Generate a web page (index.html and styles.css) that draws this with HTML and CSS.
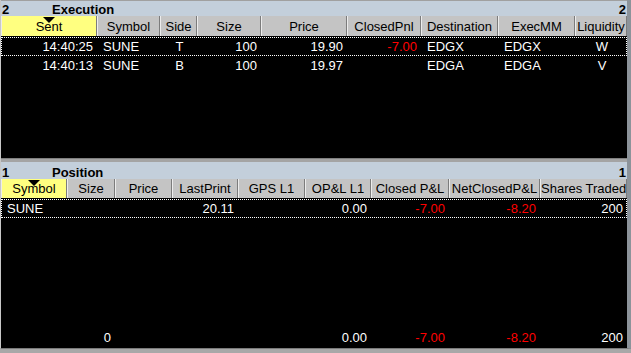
FILE: index.html
```html
<!DOCTYPE html>
<html lang="en">
<head>
  <meta charset="UTF-8" />
  <title>Execution / Position</title>
  <link rel="stylesheet" href="styles.css">
</head>
<body>
  <div class="window">

    <!-- Execution panel -->
    <section class="panel exec">
      <div class="title-bar">
        <span class="count">2</span>
        <span class="title">Execution</span>
        <span class="count right">2</span>
      </div>
      <div class="grid exec-cols head">
        <div class="hcell sorted">Sent<i class="sort"></i></div>
        <div class="hcell">Symbol</div>
        <div class="hcell">Side</div>
        <div class="hcell">Size</div>
        <div class="hcell">Price</div>
        <div class="hcell">ClosedPnl</div>
        <div class="hcell">Destination</div>
        <div class="hcell">ExecMM</div>
        <div class="hcell">Liquidity</div>
      </div>
      <div class="body">
        <div class="grid exec-cols row focused">
          <div class="r">14:40:25</div>
          <div class="l">SUNE</div>
          <div class="c">T</div>
          <div class="r">100</div>
          <div class="r">19.90</div>
          <div class="r neg">-7.00</div>
          <div class="l">EDGX</div>
          <div class="l">EDGX</div>
          <div class="c">W</div>
        </div>
        <div class="grid exec-cols row">
          <div class="r">14:40:13</div>
          <div class="l">SUNE</div>
          <div class="c">B</div>
          <div class="r">100</div>
          <div class="r">19.97</div>
          <div class="r"></div>
          <div class="l">EDGA</div>
          <div class="l">EDGA</div>
          <div class="c">V</div>
        </div>
      </div>
    </section>

    <div class="splitter"></div>

    <!-- Position panel -->
    <section class="panel pos">
      <div class="title-bar">
        <span class="count">1</span>
        <span class="title">Position</span>
        <span class="count right">1</span>
      </div>
      <div class="grid pos-cols head">
        <div class="hcell sorted">Symbol<i class="sort"></i></div>
        <div class="hcell">Size</div>
        <div class="hcell">Price</div>
        <div class="hcell">LastPrint</div>
        <div class="hcell">GPS L1</div>
        <div class="hcell">OP&amp;L L1</div>
        <div class="hcell">Closed P&amp;L</div>
        <div class="hcell">NetClosedP&amp;L</div>
        <div class="hcell">Shares Traded</div>
      </div>
      <div class="body">
        <div class="grid pos-cols row focused">
          <div class="l">SUNE</div>
          <div class="r"></div>
          <div class="r"></div>
          <div class="r">20.11</div>
          <div class="r"></div>
          <div class="r">0.00</div>
          <div class="r neg">-7.00</div>
          <div class="r neg">-8.20</div>
          <div class="r">200</div>
        </div>
        <div class="grid pos-cols row totals">
          <div class="l"></div>
          <div class="r">0</div>
          <div class="r"></div>
          <div class="r"></div>
          <div class="r"></div>
          <div class="r">0.00</div>
          <div class="r neg">-7.00</div>
          <div class="r neg">-8.20</div>
          <div class="r">200</div>
        </div>
      </div>
    </section>

  </div>
</body>
</html>
```

FILE: styles.css
```css
/* Base */
html, body {
  margin: 0;
  padding: 0;
}

body {
  width: 631px;
  height: 353px;
  background: #a8a8a8;
  font-family: "Liberation Sans", Arial, sans-serif;
  font-size: 13px;
  overflow: hidden;
}

.window {
  height: 349px;
  display: flex;
  flex-direction: column;
  border-left: 1px solid #c8c8c8;
  border-right: 4px solid #8c939a;
  border-bottom: 1px solid #7a7a7a;
  box-sizing: border-box;
  background: #000;
}

/* Panels */
.panel {
  display: flex;
  flex-direction: column;
}

.exec {
  height: 158px;
  border-top: 1px solid #a0a0a0;
  box-sizing: border-box;
}

.pos {
  flex: 1;
}

.splitter {
  height: 4px;
  background: #a4a4a4;
  border-top: 1px solid #808080;
  box-sizing: border-box;
}

/* Title bar */
.title-bar {
  height: 15px;
  box-sizing: border-box;
  padding-top: 2px;
  background: #c3cfdb;
  display: flex;
  align-items: center;
  font-weight: bold;
  color: #000;
  line-height: 13px;
}

.pos .title-bar {
  height: 17px;
  padding-top: 3px;
}

.count {
  width: 50px;
  padding-left: 1px;
}

.count.right {
  width: auto;
  margin-left: auto;
  padding-right: 1px;
}

/* Column grids */
.grid {
  display: grid;
}

.exec-cols {
  grid-template-columns: 96px 63px 37px 64px 86px 74px 77px 77px 52px;
}

.pos-cols {
  grid-template-columns: 66px 48px 57px 66px 67px 66px 78px 91px 87px;
}

/* Header */
.head {
  height: 20px;
}

.pos .head {
  height: 19px;
}

.hcell {
  position: relative;
  background: #c4c4c4;
  color: #000;
  text-align: center;
  line-height: 19px;
  padding-top: 1px;
  border-left: 1px solid #ececec;
  border-right: 1px solid #7c7c7c;
  box-sizing: border-box;
  white-space: nowrap;
  overflow: hidden;
}

.pos .hcell {
  line-height: 18px;
}

.hcell.sorted {
  background: #ffff80;
}

.sort {
  position: absolute;
  top: 1px;
  left: 50%;
  margin-left: -6px;
  width: 0;
  height: 0;
  border-left: 6px solid transparent;
  border-right: 6px solid transparent;
  border-top: 6px solid #000;
}

/* Body rows */
.body {
  flex: 1;
  display: flex;
  flex-direction: column;
  background: #000;
  padding-top: 1px;
}

.row {
  height: 19px;
  line-height: 18px;
  color: #fff;
  border: 1px dotted transparent;
  box-sizing: border-box;
  white-space: nowrap;
}

.row.focused {
  border-color: #fff;
}

.row > div {
  padding: 0 5px;
  overflow: hidden;
}

.row .l { text-align: left; }
.row .r { text-align: right; }
.row .c { text-align: center; }

.neg {
  color: #ff0000;
}

.totals {
  margin-top: auto;
  margin-bottom: 1px;
}
```
